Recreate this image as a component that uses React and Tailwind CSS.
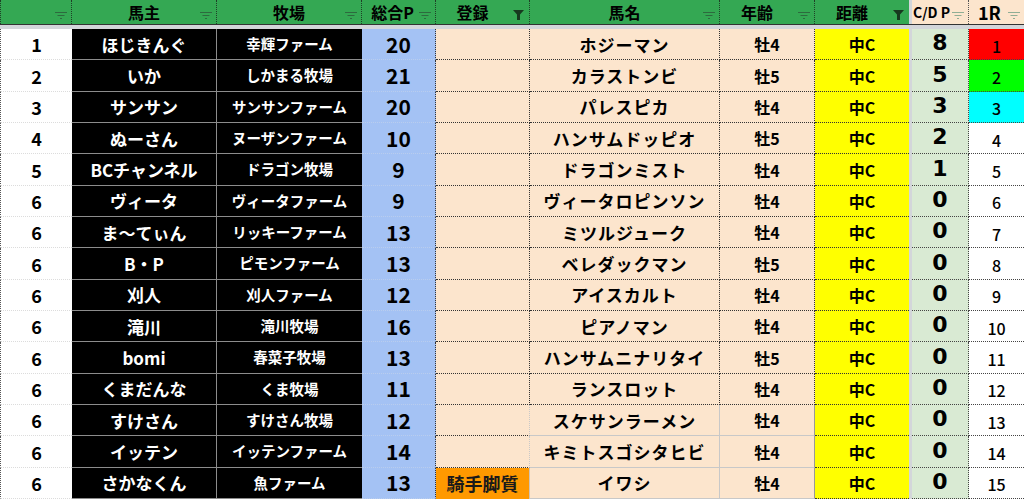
import React from "react";

const rows = [
  ["1", "ほじきんぐ", "幸輝ファーム", "20", "", "ホジーマン", "牡4", "8", "1", "bg-[#ff0000]"],
  ["2", "いか", "しかまる牧場", "21", "", "カラストンビ", "牡5", "5", "2", "bg-[#00ff00]"],
  ["3", "サンサン", "サンサンファーム", "20", "", "パレスピカ", "牡4", "3", "3", "bg-[#00ffff]"],
  ["4", "ぬーさん", "ヌーザンファーム", "10", "", "ハンサムドッピオ", "牡5", "2", "4", "bg-white"],
  ["5", "BCチャンネル", "ドラゴン牧場", "9", "", "ドラゴンミスト", "牡4", "1", "5", "bg-white"],
  ["6", "ヴィータ", "ヴィータファーム", "9", "", "ヴィータロピンソン", "牡4", "0", "6", "bg-white"],
  ["6", "ま〜てぃん", "リッキーファーム", "13", "", "ミツルジューク", "牡4", "0", "7", "bg-white"],
  ["6", "B・P", "ピモンファーム", "13", "", "ベレダックマン", "牡5", "0", "8", "bg-white"],
  ["6", "刈人", "刈人ファーム", "12", "", "アイスカルト", "牡4", "0", "9", "bg-white"],
  ["6", "滝川", "滝川牧場", "16", "", "ピアノマン", "牡4", "0", "10", "bg-white"],
  ["6", "bomi", "春菜子牧場", "13", "", "ハンサムニナリタイ", "牡5", "0", "11", "bg-white"],
  ["6", "くまだんな", "くま牧場", "11", "", "ランスロット", "牡4", "0", "12", "bg-white"],
  ["6", "すけさん", "すけさん牧場", "12", "", "スケサンラーメン", "牡4", "0", "13", "bg-white"],
  ["6", "イッテン", "イッテンファーム", "14", "", "キミトスゴシタヒビ", "牡4", "0", "14", "bg-white"],
  ["6", "さかなくん", "魚ファーム", "13", "騎手脚質", "イワシ", "牡4", "0", "15", "bg-white"],
];

function Lines({ light }) {
  return (
    <svg width="12" height="8" viewBox="0 0 12 8" className="absolute right-[4px] top-[12px]">
      <g stroke={light ? "#8fae95" : "#2d6a3e"} strokeWidth="1">
        <line x1="0" y1="0.5" x2="12" y2="0.5" />
        <line x1="2.5" y1="3.5" x2="9.5" y2="3.5" />
        <line x1="5" y1="6.5" x2="7" y2="6.5" />
      </g>
    </svg>
  );
}

function Funnel() {
  return (
    <svg width="11" height="10" viewBox="0 0 11 10" className="absolute right-[5px] top-[10px]">
      <path d="M0 0 H11 L7 4.5 V10 H4 V4.5 Z" fill="#17391f" />
    </svg>
  );
}

const font = { fontFamily: '"Noto Sans CJK JP", "Noto Sans", sans-serif' };

const cols =
  "grid grid-cols-[72px_145px_145px_74px_94px_190px_95px_94px_3px_57px_55px]";

export default function App() {
  return (
    <div className="w-[1024px] h-[500px] overflow-hidden bg-white text-black font-bold" style={font}>
      {/* header */}
      <div className={`${cols} h-[24px]`}>
        <div className="relative bg-[#34a853] border-l border-r border-dotted border-[#1f3f27]">
          <Lines />
        </div>
        <div className="relative bg-[#34a853] border-r border-dotted border-[#1f3f27] flex items-center justify-center text-[16px] leading-none">
          馬主
          <Lines />
        </div>
        <div className="relative bg-[#34a853] border-r border-dotted border-[#1f3f27] flex items-center justify-center text-[16px] leading-none">
          牧場
          <Lines />
        </div>
        <div className="relative bg-[#34a853] border-r border-dotted border-[#1f3f27] flex items-center justify-center pr-[12px] text-[16px] leading-none">
          総合P
          <Lines />
        </div>
        <div className="relative bg-[#34a853] border-r border-dotted border-[#1f3f27] flex items-center justify-center pr-[20px] text-[16px] leading-none">
          登録
          <Funnel />
        </div>
        <div className="relative bg-[#34a853] border-r border-dotted border-[#1f3f27] flex items-center justify-center text-[16px] leading-none">
          馬名
          <Lines />
        </div>
        <div className="relative bg-[#34a853] border-r border-dotted border-[#1f3f27] flex items-center justify-center pr-[20px] text-[16px] leading-none">
          年齢
          <Lines />
        </div>
        <div className="relative bg-[#34a853] flex items-center justify-center pr-[20px] text-[16px] leading-none">
          距離
          <Funnel />
        </div>
        <div className="bg-[#d3d6da]" />
        <div className="relative bg-[#fce5cd] border-r border-dotted border-[#555] flex items-center pl-[1px] text-[14px] leading-none">
          C/D P
          <Lines light />
        </div>
        <div className="relative bg-[#fce5cd] flex items-center pl-[9px] text-[18px] leading-none">
          1R
          <Lines light />
        </div>
      </div>
      <div className="h-[1px] bg-[#333]" />
      <div className="h-[4px] bg-[#d3d6da]" />

      {rows.map((r, i) => {
        const late = i >= 12;
        return (
          <div key={i} className={`${cols} h-[31.35px]`}>
            <div className="bg-white border-l border-dotted border-l-[#555] border-b border-b-[#dcdcdc] flex items-center justify-center text-[18px] leading-none">
              {r[0]}
            </div>
            <div className="bg-black text-white border-r border-b border-[#8c8c8c] flex items-center justify-center text-[17px] leading-none whitespace-nowrap overflow-hidden">
              {r[1]}
            </div>
            <div className="bg-black text-white border-b border-[#8c8c8c] flex items-center justify-center text-[14.5px] leading-none whitespace-nowrap overflow-hidden">
              {r[2]}
            </div>
            <div className="bg-[#a4c2f4] border-b border-b-[#b9cdee] border-r border-dotted border-r-[#333] flex items-center justify-center text-[21px] leading-none">
              {r[3]}
            </div>
            {r[4] ? (
              <div className="bg-[#ff9900] border-r border-r-[#d0c4b8] flex items-center justify-center text-[18px] leading-none text-[#1a1a1a] whitespace-nowrap">
                {r[4]}
              </div>
            ) : (
              <div
                className={`bg-[#fce5cd] border-b border-dotted border-b-[#333] border-r ${
                  late ? "border-r-[#c8c8c8]" : "border-r-[#333]"
                }`}
              />
            )}
            <div
              className={`bg-[#fce5cd] border-b border-r flex items-center justify-center text-[17px] tracking-[1px] leading-none whitespace-nowrap ${
                late ? "border-solid border-[#c8c8c8]" : "border-dotted border-[#333]"
              }`}
            >
              {r[5]}
            </div>
            <div
              className={`bg-[#fce5cd] border-b border-r flex items-center justify-center text-[16px] leading-none ${
                late ? "border-solid border-b-[#c8c8c8] border-r-[#999]" : "border-dotted border-[#333]"
              }`}
            >
              {r[6]}
            </div>
            <div className="bg-[#ffff00] border-b border-dotted border-[#333] flex items-center justify-center text-[16px] leading-none">
              中C
            </div>
            <div className="bg-[#d3d6da]" />
            <div
              className="bg-[#d9ead3] border-b border-r border-dotted border-[#444] flex items-center justify-center pb-[2px] text-[22px] leading-none"
              style={{ fontFamily: '"DejaVu Sans", sans-serif' }}
            >
              {r[7]}
            </div>
            <div
              className={`${r[9]} border-b border-dotted border-[#444] flex items-center justify-center pt-[3px] text-[16px] font-medium leading-none`}
            >
              {r[8]}
            </div>
          </div>
        );
      })}
    </div>
  );
}
